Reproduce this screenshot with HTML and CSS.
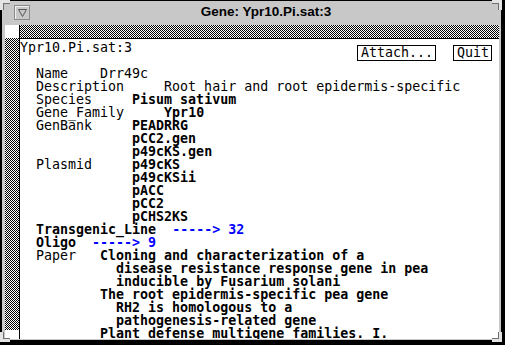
FILE: index.html
```html
<!DOCTYPE html>
<html lang="en">
<head>
    <meta charset="UTF-8">
    <title>Gene: Ypr10.Pi.sat:3</title>
    <link rel="stylesheet" href="styles.css">
</head>
<body>
    <div class="window">
        <!-- resize corners of the window frame -->
        <div class="corner-mark tl"></div>
        <div class="corner-mark tr"></div>
        <div class="corner-mark bl"></div>
        <div class="corner-mark br"></div>

        <div class="titlebar">
            <div class="menu-btn">
                <svg width="9" height="8" viewBox="0 0 9 8">
                    <polygon points="0.5,0.5 8.5,0.5 4.5,7.5" fill="none" stroke="#555" stroke-width="1"/>
                </svg>
            </div>
            <div class="title">Gene: Ypr10.Pi.sat:3</div>
        </div>

        <div class="client">
            <div class="scroll-corner"></div>
            <div class="vline"></div>
            <div class="hscroll"></div>
            <div class="hline"></div>
            <div class="vscroll"><div class="thumb"></div></div>
            <div class="content">
                <div class="head">
                    <span class="gene-id">Ypr10.Pi.sat:3</span>
                    <div class="buttons">
                        <button>Attach...</button>
                        <button>Quit</button>
                    </div>
                </div>
<pre class="record">

  Name    Drr49c
  Description     Root hair and root epidermis-specific
  Species     <b>Pisum sativum</b>
  Gene_Family     <b>Ypr10</b>
  GenBank     <b>PEADRRG</b>
              <b>pCC2.gen</b>
              <b>p49cKS.gen</b>
  Plasmid     <b>p49cKS</b>
              <b>p49cKSii</b>
              <b>pACC</b>
              <b>pCC2</b>
              <b>pCHS2KS</b>
  <b>Transgenic_Line</b>  <span class="link">-----&gt; 32</span>
  <b>Oligo</b>  <span class="link">-----&gt; 9</span>
  Paper   <b>Cloning and characterization of a</b>
            <b>disease resistance response gene in pea</b>
            <b>inducible by Fusarium solani</b>
          <b>The root epidermis-specific pea gene</b>
            <b>RH2 is homologous to a</b>
            <b>pathogenesis-related gene</b>
          <b>Plant defense multigene families. I.</b>
</pre>
            </div>
        </div>
    </div>
</body>
</html>
```

FILE: styles.css
```css
body {
    margin: 0;
    background-color: #000;
    overflow: hidden;
}
.window {
    position: relative;
    width: 505px;
    height: 345px;
    box-sizing: border-box;
    background-color: #c8c8c8;
    border-top: 1px solid #000;
    border-left: 2px solid #000;
    border-right: 4px solid #000;
    border-bottom: 5px solid #000;
    padding: 0 2px 1px 3px;
    display: flex;
    flex-direction: column;
}
.corner-mark {
    position: absolute;
    width: 7px;
    height: 7px;
    border: 0 solid #e4e4e4;
    box-sizing: content-box;
}
.corner-mark.tl {
    top: -1px;
    left: -2px;
    border-top-width: 3px;
    border-left-width: 3px;
    box-shadow: inset 1px 1px #707070;
}
.corner-mark.tr {
    top: -1px;
    right: -1px;
    border-top-width: 3px;
    border-right-width: 3px;
    box-shadow: inset -1px 1px #707070;
}
.corner-mark.bl {
    bottom: -2px;
    left: -2px;
    border-bottom-width: 3px;
    border-left-width: 3px;
    box-shadow: inset 1px -1px #707070;
}
.corner-mark.br {
    bottom: -2px;
    right: -1px;
    border-bottom-width: 3px;
    border-right-width: 3px;
    box-shadow: inset -1px -1px #707070;
}
.titlebar {
    height: 24px;
    display: flex;
    align-items: flex-start;
}
.menu-btn {
    width: 14px;
    height: 13px;
    margin: 4px 0 0 9px;
    border: 1px solid #8a8a8a;
    box-shadow: inset 1px 1px #f0f0f0;
    display: flex;
    align-items: center;
    justify-content: center;
}
.title {
    flex: 1;
    text-align: center;
    font-family: "Liberation Sans", Arial, sans-serif;
    font-weight: bold;
    font-size: 13.5px;
    line-height: 22px;
    color: #000;
    padding-left: 3px;
}
.client {
    flex: 1;
    display: grid;
    grid-template-columns: 14px 1px 1fr;
    grid-template-rows: 13px 1px 1fr;
    background-color: #fff;
    min-height: 0;
}
.scroll-corner {
    grid-column: 1;
    grid-row: 1;
    background-color: #fff;
}
.vline {
    grid-column: 2;
    grid-row: 1 / 4;
    background-color: #000;
}
.hscroll {
    grid-column: 3;
    grid-row: 1;
    background: repeating-conic-gradient(#000 0 25%, #fff 0 50%) 0 0 / 2px 2px;
}
.hline {
    grid-column: 3;
    grid-row: 2;
    background-color: #000;
}
.vscroll {
    grid-column: 1;
    grid-row: 2 / 4;
    background-color: #fff;
}
.vscroll .thumb {
    height: 292px;
    background: repeating-conic-gradient(#000 0 25%, #fff 0 50%) 0 0 / 2px 2px;
}
.content {
    grid-column: 3;
    grid-row: 3;
    overflow: hidden;
    padding-top: 2px;
    font-family: "DejaVu Sans Mono", "Liberation Mono", monospace;
    font-size: 13.3px;
    line-height: 13px;
    color: #000;
}
.head {
    display: flex;
    justify-content: space-between;
    height: 13px;
}
.buttons {
    display: flex;
    gap: 17px;
    margin: 4px 7px 0 0;
}
.buttons button {
    font-family: inherit;
    font-size: inherit;
    line-height: 14px;
    height: 16px;
    margin: 0;
    padding: 0 2px 0 3px;
    border: 1px solid #000;
    border-radius: 0;
    background-color: #fff;
    color: #000;
}
.record {
    margin: 0;
    font-family: inherit;
    font-size: inherit;
    line-height: 13px;
}
.record b {
    font-weight: bold;
}
.record .link {
    color: #0000ff;
    font-weight: bold;
}
```
